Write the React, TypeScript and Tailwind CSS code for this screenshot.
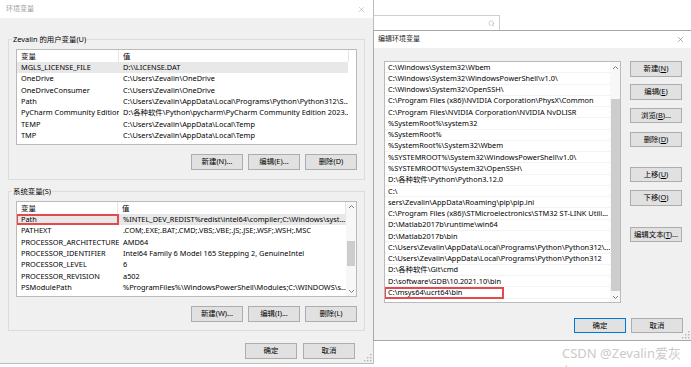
import React from 'react';
import { X, Search } from 'lucide-react';

const userVars: [string, string][] = [
  ['MGLS_LICENSE_FILE', 'D:\\\\LICENSE.DAT'],
  ['OneDrive', 'C:\\Users\\Zevalin\\OneDrive'],
  ['OneDriveConsumer', 'C:\\Users\\Zevalin\\OneDrive'],
  ['Path', 'C:\\Users\\Zevalin\\AppData\\Local\\Programs\\Python\\Python312\\S...'],
  ['PyCharm Community Edition', 'D:\\各种软件\\Python\\pycharm\\PyCharm Community Edition 2023...'],
  ['TEMP', 'C:\\Users\\Zevalin\\AppData\\Local\\Temp'],
  ['TMP', 'C:\\Users\\Zevalin\\AppData\\Local\\Temp'],
];

const sysVars: [string, string][] = [
  ['Path', '%INTEL_DEV_REDIST%redist\\intel64\\compiler;C:\\Windows\\syst...'],
  ['PATHEXT', '.COM;.EXE;.BAT;.CMD;.VBS;.VBE;.JS;.JSE;.WSF;.WSH;.MSC'],
  ['PROCESSOR_ARCHITECTURE', 'AMD64'],
  ['PROCESSOR_IDENTIFIER', 'Intel64 Family 6 Model 165 Stepping 2, GenuineIntel'],
  ['PROCESSOR_LEVEL', '6'],
  ['PROCESSOR_REVISION', 'a502'],
  ['PSModulePath', '%ProgramFiles%\\WindowsPowerShell\\Modules;C:\\WINDOWS\\s...'],
  ['TEMP', 'C:\\WINDOWS\\TEMP'],
];

const paths = [
  'C:\\Windows\\System32\\Wbem',
  'C:\\Windows\\System32\\WindowsPowerShell\\v1.0\\',
  'C:\\Windows\\System32\\OpenSSH\\',
  'C:\\Program Files (x86)\\NVIDIA Corporation\\PhysX\\Common',
  'C:\\Program Files\\NVIDIA Corporation\\NVIDIA NvDLISR',
  '%SystemRoot%\\system32',
  '%SystemRoot%',
  '%SystemRoot%\\System32\\Wbem',
  '%SYSTEMROOT%\\System32\\WindowsPowerShell\\v1.0\\',
  '%SYSTEMROOT%\\System32\\OpenSSH\\',
  'D:\\各种软件\\Python\\Python3.12.0',
  'C:\\',
  'sers\\Zevalin\\AppData\\Roaming\\pip\\pip.ini',
  'C:\\Program Files (x86)\\STMicroelectronics\\STM32 ST-LINK Utili...',
  'D:\\Matlab2017b\\runtime\\win64',
  'D:\\Matlab2017b\\bin',
  'C:\\Users\\Zevalin\\AppData\\Local\\Programs\\Python\\Python312\\...',
  'C:\\Users\\Zevalin\\AppData\\Local\\Programs\\Python\\Python312',
  'D:\\各种软件\\Git\\cmd',
  'D:\\software\\GDB\\10.2021.10\\bin',
  'C:\\msys64\\ucrt64\\bin',
];

const Btn = ({ children, className = '' }: { children: React.ReactNode; className?: string }) => (
  <div className={`flex items-center justify-center border border-[#adadad] bg-[#e1e1e1] text-[7.4px] text-black whitespace-nowrap ${className}`}>
    {children}
  </div>
);

const Up = () => (
  <svg width="7" height="5" viewBox="0 0 7 5"><path d="M1 4 L3.5 1.5 L6 4" fill="none" stroke="#707070" strokeWidth="0.9" /></svg>
);
const Down = () => (
  <svg width="7" height="5" viewBox="0 0 7 5"><path d="M1 1 L3.5 3.5 L6 1" fill="none" stroke="#707070" strokeWidth="0.9" /></svg>
);

const Grip = () => (
  <svg width="8" height="8" viewBox="0 0 8 8" className="absolute right-[1px] bottom-[1px]">
    {[[6, 6], [3, 6], [6, 3], [0, 6], [3, 3], [6, 0]].map(([x, y], i) => (
      <rect key={i} x={x} y={y} width="1.4" height="1.4" fill="#b5b5b5" />
    ))}
  </svg>
);

function Group({ label, children, className = '' }: { label: string; children: React.ReactNode; className?: string }) {
  return (
    <div className={`relative border border-[#dcdcdc] px-[7px] pt-[9px] ${className}`}>
      <span className="absolute -top-[7px] left-[3px] bg-[#f0f0f0] px-[1px] text-[7.4px] leading-[12px] text-black">{label}</span>
      {children}
    </div>
  );
}

function VarHeader() {
  return (
    <div className="flex h-[12px] shrink-0 text-[7.4px] text-black">
      <div className="w-[102px] border-r border-[#e5e5e5] pl-[4px] leading-[12px]">变量</div>
      <div className="w-[230px] border-r border-[#e5e5e5] pl-[4px] leading-[12px]">值</div>
    </div>
  );
}

function VarRow({ name, value, selected, boxed }: { name: string; value: string; selected?: boolean; boxed?: boolean }) {
  return (
    <div className={`relative flex h-[11.3px] w-[331px] shrink-0 items-center text-[7.4px] text-black ${selected ? 'bg-[#e8e8e8]' : ''}`}>
      <div className="w-[102px] overflow-hidden whitespace-nowrap pl-[4px]">{name}</div>
      <div className="w-[229px] overflow-hidden whitespace-nowrap pl-[4px]">{value}</div>
      {boxed && <div className="absolute -left-[1px] top-0 h-full w-[103px] border-2 border-[#e5484d]" />}
    </div>
  );
}

function EnvWindow() {
  return (
    <div className="absolute left-0 top-0 flex h-[364px] w-[374px] flex-col border-r border-b border-[#bdbdbd] bg-[#f0f0f0]">
      <div className="flex h-[18px] shrink-0 items-center justify-between bg-white pl-[6px] pr-[7px]">
        <span className="text-[7px] text-[#a0a0a0]">环境变量</span>
        <X size={9} strokeWidth={1} color="#8a8a8a" />
      </div>
      <div className="flex flex-1 flex-col px-[8px] pt-[21px]">
        <Group label="Zevalin 的用户变量(U)" className="pb-[9px]">
          <div className="flex h-[96px] flex-col overflow-hidden border border-[#bababa] bg-white">
            <VarHeader />
            {userVars.map(([n, v], i) => (
              <VarRow key={n} name={n} value={v} selected={i === 0} />
            ))}
          </div>
          <div className="mt-[9px] flex justify-end gap-[5px]">
            <Btn className="h-[16px] w-[52px]">新建(N)...</Btn>
            <Btn className="h-[16px] w-[52px]">编辑(E)...</Btn>
            <Btn className="h-[16px] w-[52px]">删除(D)</Btn>
          </div>
        </Group>
        <Group label="系统变量(S)" className="mt-[11px] pb-[8px]">
          <div className="flex h-[96px] overflow-hidden border border-[#bababa] bg-white">
            <div className="flex flex-1 flex-col overflow-hidden">
              <VarHeader />
              {sysVars.map(([n, v], i) => (
                <VarRow key={n + i} name={n} value={v} selected={i === 0} boxed={i === 0} />
              ))}
            </div>
            <div className="flex w-[10px] shrink-0 flex-col items-center bg-[#f7f7f7]">
              <div className="flex h-[9px] items-center"><Up /></div>
              <div className="mt-[30px] h-[25px] w-[8px] bg-[#cdcdcd]" />
              <div className="flex-1" />
              <div className="flex h-[9px] items-center"><Down /></div>
            </div>
          </div>
          <div className="mt-[9px] flex justify-end gap-[5px]">
            <Btn className="h-[16px] w-[52px]">新建(W)...</Btn>
            <Btn className="h-[16px] w-[52px]">编辑(I)...</Btn>
            <Btn className="h-[16px] w-[52px]">删除(L)</Btn>
          </div>
        </Group>
        <div className="mt-[12px] mr-[10px] flex justify-end gap-[6px]">
          <Btn className="h-[16px] w-[52px]">确定</Btn>
          <Btn className="h-[16px] w-[52px]">取消</Btn>
        </div>
      </div>
      <Grip />
    </div>
  );
}

const U = ({ c }: { c: string }) => <span className="underline underline-offset-1">{c}</span>;

function EditWindow() {
  return (
    <div className="absolute left-[373px] top-[30px] flex h-[311px] w-[318px] flex-col border border-r-0 border-[#a8a8a8] bg-[#f0f0f0]">
      <div className="flex h-[17px] shrink-0 items-center justify-between bg-white pl-[4px] pr-[6px]">
        <span className="text-[7px] text-[#222]">编辑环境变量</span>
        <X size={9} strokeWidth={1} color="#333" />
      </div>
      <div className="flex pl-[10px] pt-[13px]">
        <div className="flex h-[242px] w-[237px] overflow-hidden border border-[#bababa] bg-white">
          <div className="flex flex-1 flex-col overflow-hidden">
            {paths.map((p, i) => (
              <div key={i} className="relative flex h-[11.28px] shrink-0 items-center border-b border-[#f3f3f3] pl-[3px] text-[7.4px] text-black whitespace-nowrap">
                {p}
                {i === paths.length - 1 && (
                  <div className="absolute -left-[1px] top-0 h-[12px] w-[120px] border-2 border-[#e5484d]" />
                )}
              </div>
            ))}
          </div>
          <div className="flex w-[10px] shrink-0 flex-col items-center bg-[#f7f7f7]">
            <div className="flex h-[10px] items-center"><Up /></div>
            <div className="mt-[27px] h-[192px] w-[9px] bg-[#cdcdcd]" />
            <div className="flex-1" />
            <div className="flex h-[10px] items-center"><Down /></div>
          </div>
        </div>
        <div className="ml-[9px] flex flex-col">
          <Btn className="h-[15.5px] w-[52px]">新建(<U c="N" />)</Btn>
          <Btn className="mt-[7.8px] h-[15.5px] w-[52px]">编辑(<U c="E" />)</Btn>
          <Btn className="mt-[7.8px] h-[15.5px] w-[52px]">浏览(<U c="B" />)...</Btn>
          <Btn className="mt-[8.9px] h-[15.5px] w-[52px]">删除(<U c="D" />)</Btn>
          <Btn className="mt-[19.5px] h-[15.5px] w-[52px]">上移(<U c="U" />)</Btn>
          <Btn className="mt-[7.8px] h-[15.5px] w-[52px]">下移(<U c="O" />)</Btn>
          <Btn className="mt-[21.2px] h-[15.5px] w-[52px]">编辑文本(<U c="T" />)...</Btn>
        </div>
      </div>
      <div className="mt-[14.5px] flex justify-end gap-[5px] pr-[8px]">
        <Btn className="h-[15.5px] w-[52px] !border-[#0078d7]">确定</Btn>
        <Btn className="h-[15.5px] w-[52px]">取消</Btn>
      </div>
      <Grip />
    </div>
  );
}

export default function App() {
  return (
    <div className="relative h-[367px] w-[691px] overflow-hidden bg-white font-['Noto_Sans','Noto_Sans_CJK_SC',sans-serif]">
      {/* search box of the window underneath */}
      <div className="absolute left-[300px] top-[15px] h-[20px] w-[200px] border border-[#cfcfcf] bg-white">
        <Search size={7} strokeWidth={1.2} color="#888" className="absolute right-[4px] top-[4px]" />
      </div>
      <EnvWindow />
      <EditWindow />
      <div className="absolute left-[562px] top-[344px] text-[13px] leading-[18px] text-[#cacaca]">CSDN @Zevalin爱灰灰</div>
    </div>
  );
}
